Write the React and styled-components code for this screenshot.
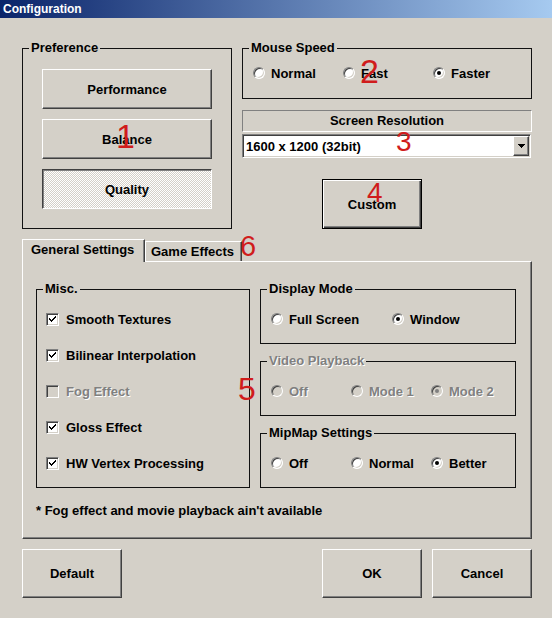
import React from 'react';
import styled, { createGlobalStyle, css } from 'styled-components';

const GlobalStyle = createGlobalStyle`
  html, body { margin: 0; padding: 0; background: #d4d0c8; }
  body { font-family: "Liberation Sans", Arial, sans-serif; }
  * { box-sizing: border-box; }
`;

const Window = styled.div`
  position: relative;
  width: 552px;
  height: 618px;
  background: #d4d0c8;
  overflow: hidden;
  display: flex;
  flex-direction: column;
  font: bold 13px "Liberation Sans", Arial, sans-serif;
  color: #000;
`;

const TitleBar = styled.div`
  height: 18px;
  flex: none;
  background: linear-gradient(to right, #0a246a, #a6caf0);
  color: #fff;
  font-size: 12px;
  font-weight: bold;
  line-height: 18px;
  padding-left: 3px;
`;

const Body = styled.div`
  padding: 23px 20px 0 22px;
  display: flex;
  flex-direction: column;
`;

const TopRow = styled.div`
  display: flex;
  gap: 10px;
`;

const GroupBox = styled.fieldset`
  margin: 0;
  padding: 0;
  min-width: 0;
  border: 1px solid #111;
  width: ${p => p.$w}px;
  height: ${p => p.$h}px;
  flex: none;
`;

const Legend = styled.legend`
  padding: 0 2px;
  margin-left: 6px;
  line-height: 14px;
  font-size: 13px;
  font-weight: bold;
  color: ${p => (p.$disabled ? '#808080' : '#000')};
  text-shadow: ${p => (p.$disabled ? '1px 1px 0 #fff' : 'none')};
`;

const ButtonStack = styled.div`
  display: flex;
  flex-direction: column;
  gap: 10px;
  padding: 14px 19px 0 19px;
`;

const raised = css`
  border: 1px solid;
  border-color: #fff #404040 #404040 #fff;
  box-shadow: inset -1px -1px 0 #808080;
  background: #d4d0c8;
`;

const PushButton = styled.button`
  ${raised}
  font: bold 13px "Liberation Sans", Arial, sans-serif;
  color: #000;
  width: ${p => p.$w}px;
  height: ${p => p.$h}px;
  padding: 0;
  flex: none;
  ${p =>
    p.$pressed &&
    css`
      border-color: #404040 #fff #fff #404040;
      box-shadow: inset 1px 1px 0 #808080;
      background-color: #d4d0c8;
      background-image: repeating-conic-gradient(#fff 0 25%, #d4d0c8 0 50%);
      background-size: 2px 2px;
    `}
  ${p =>
    p.$default &&
    css`
      border: 1px solid #000;
      box-shadow: inset 1px 1px 0 #fff, inset -1px -1px 0 #404040, inset -2px -2px 0 #808080;
    `}
`;

const RightCol = styled.div`
  width: 290px;
  display: flex;
  flex-direction: column;
`;

const RadioRow = styled.div`
  display: grid;
  grid-template-columns: ${p => p.$cols};
  padding: ${p => p.$pad};
`;

const Option = styled.label`
  display: flex;
  align-items: center;
  gap: ${p => p.$gap || 6}px;
  height: 16px;
  white-space: nowrap;
  color: ${p => (p.$disabled ? '#808080' : '#000')};
  text-shadow: ${p => (p.$disabled ? '1px 1px 0 #fff' : 'none')};
`;

const RadioCircle = styled.span`
  width: 12px;
  height: 12px;
  flex: none;
  border-radius: 50%;
  border: 1px solid;
  border-color: #808080 #fff #fff #808080;
  background: ${p => (p.$disabled ? '#d4d0c8' : '#fff')};
  box-shadow: inset 1px 1px 0 #404040, inset -1px -1px 0 #d4d0c8;
  display: flex;
  align-items: center;
  justify-content: center;
  &::after {
    content: '';
    width: 4px;
    height: 4px;
    border-radius: 50%;
    background: ${p => (p.$disabled ? '#808080' : '#000')};
    display: ${p => (p.$checked ? 'block' : 'none')};
  }
`;

const CheckBox = styled.span`
  width: 13px;
  height: 13px;
  flex: none;
  border: 1px solid;
  border-color: #808080 #fff #fff #808080;
  background: ${p => (p.$disabled ? '#d4d0c8' : '#fff')};
  box-shadow: inset 1px 1px 0 #404040, inset -1px -1px 0 #d4d0c8;
  display: flex;
  align-items: center;
  justify-content: center;
`;

const SectionHeader = styled.div`
  margin-top: 11px;
  height: 22px;
  border: 1px solid;
  border-color: #808080 #fff #fff #808080;
  text-align: center;
  line-height: 20px;
`;

const Combo = styled.div`
  margin-top: 2px;
  width: 289px;
  height: 24px;
  background: #fff;
  border: 1px solid;
  border-color: #808080 #fff #fff #808080;
  box-shadow: inset 1px 1px 0 #404040, inset -1px -1px 0 #d4d0c8;
  display: flex;
  align-items: center;
  padding: 1px 1px 1px 2px;
`;

const ComboText = styled.span`
  flex: 1;
  padding-left: 1px;
`;

const DropButton = styled.span`
  ${raised}
  width: 16px;
  height: 20px;
  display: flex;
  align-items: center;
  justify-content: center;
`;

const CustomWrap = styled.div`
  margin: 21px 0 0 80px;
`;

const TabArea = styled.div`
  margin-top: 10px;
  display: flex;
  flex-direction: column;
`;

const TabStrip = styled.div`
  display: flex;
  align-items: flex-end;
  height: 22px;
`;

const Tab = styled.div`
  position: relative;
  width: ${p => p.$w}px;
  height: ${p => (p.$active ? 23 : 20)}px;
  margin-bottom: ${p => (p.$active ? -1 : 0)}px;
  z-index: ${p => (p.$active ? 1 : 0)};
  background: #d4d0c8;
  border: 1px solid;
  border-bottom: none;
  border-color: #fff #404040 #fff #fff;
  box-shadow: inset -1px 0 0 #808080;
  padding-left: ${p => p.$pl}px;
  line-height: ${p => (p.$active ? 20 : 20)}px;
  white-space: nowrap;
`;

const TabPanel = styled.div`
  width: 510px;
  height: 278px;
  border: 1px solid;
  border-color: #fff #404040 #404040 #fff;
  box-shadow: inset -1px -1px 0 #808080;
  padding: 20px 14px 0 13px;
  display: flex;
  flex-direction: column;
`;

const PanelRow = styled.div`
  display: flex;
  gap: 10px;
`;

const CheckList = styled.div`
  display: flex;
  flex-direction: column;
  gap: 20px;
  padding: 15px 0 0 9px;
`;

const FieldStack = styled.div`
  display: flex;
  flex-direction: column;
  gap: 10px;
`;

const Footnote = styled.div`
  margin-top: 15px;
  line-height: 16px;
`;

const ButtonBar = styled.div`
  margin-top: 10px;
  display: flex;
  gap: 10px;
`;

const Spacer = styled.div`
  flex: 1;
`;

const Marker = styled.span`
  position: absolute;
  left: ${p => p.$x}px;
  top: ${p => p.$y}px;
  color: #d01c1c;
  font: 400 ${p => p.$size}px/1 "Liberation Sans", Arial, sans-serif;
  pointer-events: none;
  z-index: 5;
`;

const CheckMark = () => (
  <svg width="9" height="9" viewBox="0 0 9 9" shapeRendering="crispEdges">
    <path d="M1 3h1v1h1v1h1V4h1V3h1V2h1V1h1v2H7v1H6v1H5v1H4v1H3V6H2V5H1z" fill="#000" />
  </svg>
);

const Radio = ({ label, checked, disabled }) => (
  <Option $disabled={disabled}>
    <RadioCircle $checked={checked} $disabled={disabled} />
    {label}
  </Option>
);

const Check = ({ label, checked, disabled }) => (
  <Option $disabled={disabled} $gap={7}>
    <CheckBox $disabled={disabled}>{checked && <CheckMark />}</CheckBox>
    {label}
  </Option>
);

export default function App() {
  return (
    <>
      <GlobalStyle />
      <Window>
        <TitleBar>Configuration</TitleBar>
        <Body>
          <TopRow>
            <GroupBox $w={210} $h={188}>
              <Legend>Preference</Legend>
              <ButtonStack>
                <PushButton $w={170} $h={40}>Performance</PushButton>
                <PushButton $w={170} $h={40}>Balance</PushButton>
                <PushButton $w={170} $h={40} $pressed>Quality</PushButton>
              </ButtonStack>
            </GroupBox>
            <RightCol>
              <GroupBox $w={290} $h={58}>
                <Legend>Mouse Speed</Legend>
                <RadioRow $cols="90px 90px 90px" $pad="10px 0 0 10px">
                  <Radio label="Normal" />
                  <Radio label="Fast" />
                  <Radio label="Faster" checked />
                </RadioRow>
              </GroupBox>
              <SectionHeader>Screen Resolution</SectionHeader>
              <Combo>
                <ComboText>1600 x 1200 (32bit)</ComboText>
                <DropButton>
                  <svg width="7" height="4" viewBox="0 0 7 4" shapeRendering="crispEdges">
                    <path d="M0 0h7v1H6v1H5v1H4v1H3V3H2V2H1V1H0z" fill="#000" />
                  </svg>
                </DropButton>
              </Combo>
              <CustomWrap>
                <PushButton $w={100} $h={50} $default>Custom</PushButton>
              </CustomWrap>
            </RightCol>
          </TopRow>

          <TabArea>
            <TabStrip>
              <Tab $active $w={123} $pl={8}>General Settings</Tab>
              <Tab $w={97} $pl={5}>Game Effects</Tab>
            </TabStrip>
            <TabPanel>
              <PanelRow>
                <GroupBox $w={214} $h={206}>
                  <Legend>Misc.</Legend>
                  <CheckList>
                    <Check label="Smooth Textures" checked />
                    <Check label="Bilinear Interpolation" checked />
                    <Check label="Fog Effect" disabled />
                    <Check label="Gloss Effect" checked />
                    <Check label="HW Vertex Processing" checked />
                  </CheckList>
                </GroupBox>
                <FieldStack>
                  <GroupBox $w={256} $h={62}>
                    <Legend>Display Mode</Legend>
                    <RadioRow $cols="121px 121px" $pad="15px 0 0 10px">
                      <Radio label="Full Screen" />
                      <Radio label="Window" checked />
                    </RadioRow>
                  </GroupBox>
                  <GroupBox $w={256} $h={62}>
                    <Legend $disabled>Video Playback</Legend>
                    <RadioRow $cols="80px 80px 80px" $pad="15px 0 0 10px">
                      <Radio label="Off" disabled />
                      <Radio label="Mode 1" disabled />
                      <Radio label="Mode 2" checked disabled />
                    </RadioRow>
                  </GroupBox>
                  <GroupBox $w={256} $h={62}>
                    <Legend>MipMap Settings</Legend>
                    <RadioRow $cols="80px 80px 80px" $pad="15px 0 0 10px">
                      <Radio label="Off" />
                      <Radio label="Normal" />
                      <Radio label="Better" checked />
                    </RadioRow>
                  </GroupBox>
                </FieldStack>
              </PanelRow>
              <Footnote>* Fog effect and movie playback ain't available</Footnote>
            </TabPanel>
          </TabArea>

          <ButtonBar>
            <PushButton $w={100} $h={49}>Default</PushButton>
            <Spacer />
            <PushButton $w={100} $h={49}>OK</PushButton>
            <PushButton $w={100} $h={49}>Cancel</PushButton>
          </ButtonBar>
        </Body>

        <Marker $x={116} $y={119} $size={34}>1</Marker>
        <Marker $x={360} $y={54} $size={34}>2</Marker>
        <Marker $x={396} $y={128} $size={28}>3</Marker>
        <Marker $x={367} $y={179} $size={28}>4</Marker>
        <Marker $x={238} $y={373} $size={32}>5</Marker>
        <Marker $x={240} $y={232} $size={29}>6</Marker>
      </Window>
    </>
  );
}
